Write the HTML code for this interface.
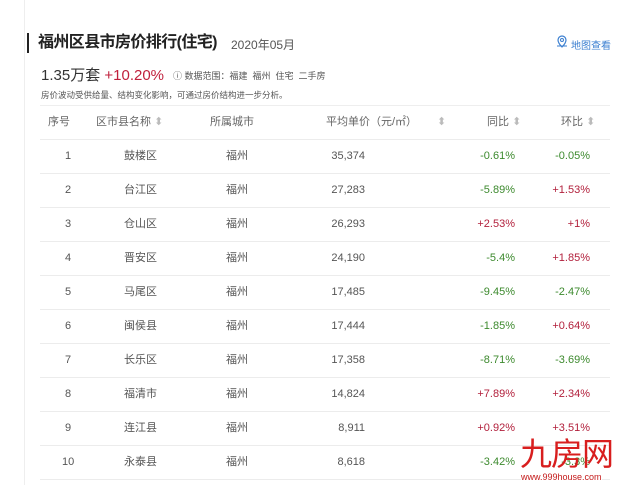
<!DOCTYPE html><html><head><meta charset="utf-8"><style>
body{margin:0;width:625px;height:485px;background:#fff;font-family:"Liberation Sans","Noto Sans CJK SC",sans-serif;position:relative;overflow:hidden;color:#333}
.a{position:absolute;white-space:nowrap}
.vl{position:absolute;left:24px;top:0;width:1px;height:485px;background:#eee}
.row{position:absolute;left:40px;width:570px;height:34px;border-bottom:1px solid #ececec;font-size:11px;color:#555}
.row span{position:absolute;top:0;line-height:34px}
.g{color:#3d8a2e}.r{color:#b2203c}
</style></head><body>
<div class="vl"></div>
<div class="a" style="left:27px;top:33px;width:2px;height:20px;background:#222"></div>
<div class="a" style="left:38px;top:31px;font-size:16px;letter-spacing:-0.6px;line-height:24px;font-weight:bold;color:#222">福州区县市房价排行(住宅)</div>
<div class="a" style="left:231px;top:36px;font-size:12px;color:#555">2020年05月</div>
<svg class="a" style="left:556px;top:35px" width="12" height="14" viewBox="0 0 12 14"><path d="M6 12C3 9 2 7 2 5a4 4 0 0 1 8 0c0 2-1 4-4 7z" fill="none" stroke="#3b7fd0" stroke-width="1.2"/><circle cx="6" cy="5" r="1.5" fill="none" stroke="#3b7fd0"/><path d="M1 11h10" stroke="#3b7fd0"/></svg>
<div class="a" style="left:571px;top:37px;font-size:10px;color:#3b7fd0">地图查看</div>
<div class="a" style="left:41px;top:64px;font-size:15px;color:#333">1.35万套 <span style="color:#c0203c">+10.20%</span></div>
<div class="a" style="left:173px;top:69px;font-size:9px;color:#555">ⓘ 数据范围：福建 &nbsp;福州 &nbsp;住宅 &nbsp;二手房</div>
<div class="a" style="left:41px;top:89px;font-size:8.5px;color:#555">房价波动受供给量、结构变化影响，可通过房价结构进一步分析。</div>
<div class="a" style="left:40px;top:105px;width:570px;height:1px;background:#eee"></div>
<div class="row" style="top:105px;color:#666;font-size:11px"><span style="left:8px">序号</span><span style="left:56px">区市县名称 <span style="position:static;color:#bbb">⬍</span></span><span style="left:170px">所属城市</span><span style="left:286px">平均单价（元/㎡）</span><span style="left:397px;color:#bbb">⬍</span><span style="left:447px">同比 <span style="position:static;color:#bbb">⬍</span></span><span style="left:521px">环比 <span style="position:static;color:#bbb">⬍</span></span></div>
<div id="t"></div>
<script>
var d=[["鼓楼区","35,374","-0.61%","-0.05%"],["台江区","27,283","-5.89%","+1.53%"],["仓山区","26,293","+2.53%","+1%"],["晋安区","24,190","-5.4%","+1.85%"],["马尾区","17,485","-9.45%","-2.47%"],["闽侯县","17,444","-1.85%","+0.64%"],["长乐区","17,358","-8.71%","-3.69%"],["福清市","14,824","+7.89%","+2.34%"],["连江县","8,911","+0.92%","+3.51%"],["永泰县","8,618","-3.42%","-3.3%"]];
var h="";d.forEach(function(r,i){var c=function(v){return v[0]=="-"?"g":"r"};
h+='<div class="row" style="top:'+(139+i*34)+'px"><span style="left:'+(i==9?22:25)+'px">'+(i+1)+'</span><span style="left:84px">'+r[0]+'</span><span style="left:186px">福州</span><span style="right:245px">'+r[1]+'</span><span class="'+c(r[2])+'" style="right:95px">'+r[2]+'</span><span class="'+c(r[3])+'" style="right:20px">'+r[3]+'</span></div>';});
document.getElementById("t").innerHTML=h;
</script>
<div class="a" style="left:520px;top:436px;font-size:32px;line-height:36px;color:#d81e1e;letter-spacing:-1px">九房网</div>
<div class="a" style="left:521px;top:472px;font-size:9px;color:#c41a1a;background:#fff">www.999house.com</div>
</body></html>
